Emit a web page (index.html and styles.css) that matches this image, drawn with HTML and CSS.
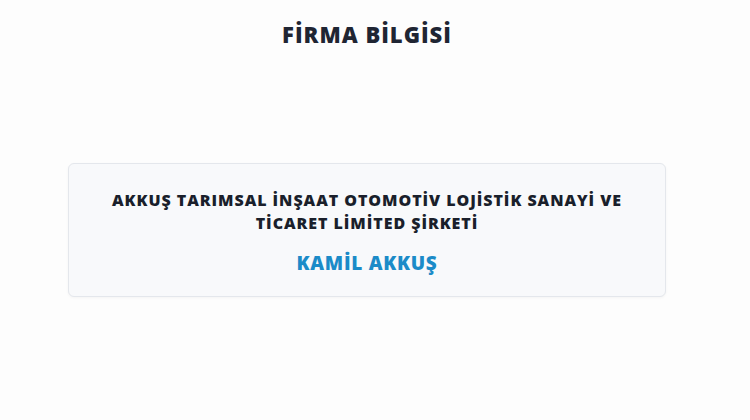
FILE: index.html
```html
<!DOCTYPE html>
<html lang="tr">
<head>
<meta charset="utf-8">
<link rel="stylesheet" href="styles.css">
</head>
<body>
<main class="page">
  <h1 class="title">FİRMA BİLGİSİ</h1>
  <section class="card">
    <p class="company">AKKUŞ TARIMSAL İNŞAAT OTOMOTİV LOJİSTİK SANAYİ VE TİCARET LİMİTED ŞİRKETİ</p>
    <p class="owner">KAMİL AKKUŞ</p>
  </section>
</main>
</body>
</html>
```

FILE: styles.css
```css
html, body {
  margin: 0;
  padding: 0;
}
body {
  background: #fdfdfd;
  font-family: "Open Sans", "Liberation Sans", sans-serif;
  color: #1f2533;
  width: 750px;
  height: 420px;
  overflow: hidden;
}
.page {
  width: 734px;
  display: flex;
  flex-direction: column;
  align-items: center;
  padding-top: 19px;
}
.title {
  margin: 0;
  font-size: 22px;
  font-weight: 800;
  letter-spacing: 1px;
  color: #1f2533;
  line-height: 30px;
}
.card {
  margin-top: 114px;
  width: 598px;
  height: 134px;
  box-sizing: border-box;
  background: #f8f9fb;
  border: 1px solid #e4e7ec;
  border-radius: 6px;
  box-shadow: 0 1px 3px rgba(0,0,0,0.04);
  display: flex;
  flex-direction: column;
  align-items: center;
  padding-top: 25px;
}
.company {
  margin: 0;
  width: 540px;
  text-align: center;
  font-size: 16px;
  font-weight: 800;
  letter-spacing: 0.95px;
  line-height: 23px;
  color: #1a1f2b;
}
.owner {
  margin: 15px 0 0;
  font-size: 19px;
  font-weight: 800;
  letter-spacing: 0.7px;
  color: #1b8bc8;
  line-height: 26px;
}
```
